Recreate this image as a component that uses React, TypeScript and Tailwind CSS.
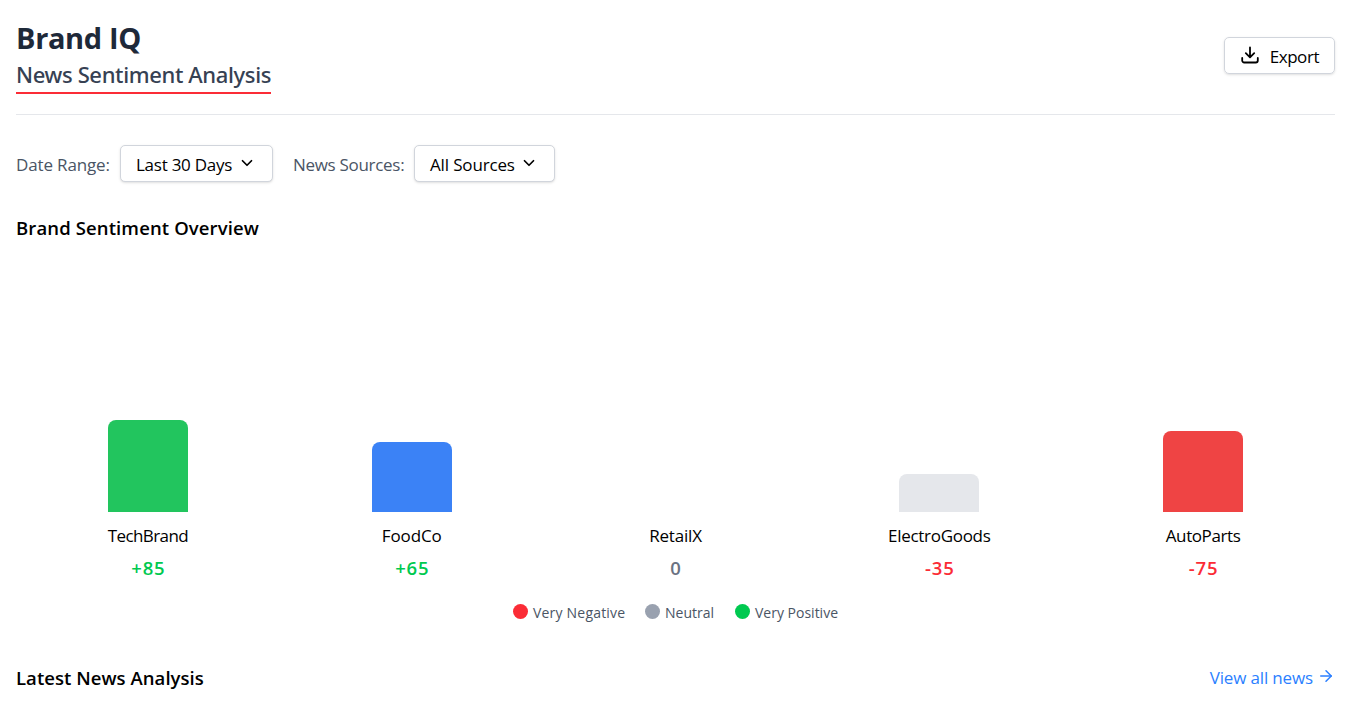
import { ArrowRight, ChevronDown } from "lucide-react";

const brands = [
  { name: "TechBrand", score: "+85", height: 92, bar: "bg-[#22c55e]", text: "text-[#00c950]", track: "tracking-[-0.6px]" },
  { name: "FoodCo", score: "+65", height: 70, bar: "bg-[#3b82f6]", text: "text-[#00c950]", track: "tracking-[-0.1px]" },
  { name: "RetailX", score: "0", height: 0, bar: "bg-[#9ca3af]", text: "text-[#6a7282]", track: "tracking-[-0.2px]" },
  { name: "ElectroGoods", score: "-35", height: 38, bar: "bg-[#e5e7eb]", text: "text-[#fb2c36]", track: "tracking-[-0.3px]" },
  { name: "AutoParts", score: "-75", height: 81, bar: "bg-[#ef4444]", text: "text-[#fb2c36]", track: "tracking-[-0.4px]" },
];

function DownloadIcon() {
  return (
    <svg width="20" height="20" viewBox="0 0 20 20" fill="none" stroke="currentColor" strokeWidth="1.8" strokeLinecap="round" strokeLinejoin="round" className="mb-0.5">
      <path d="M10 2.500v9.500M5.800 8.200l4.200 4.200 4.200-4.200" />
      <path d="M2.200 13v2.500a2 2 0 0 0 2 2h11.600a2 2 0 0 0 2-2V13" />
    </svg>
  );
}

function Select({ label, className }: { label: string; className: string }) {
  return (
    <button className={`flex h-[37px] items-center justify-between rounded-[5px] border border-[#d1d5dc] bg-white pr-4 pl-[15px] whitespace-nowrap shadow-sm ${className}`}>
      <span className="pt-0.5">{label}</span>
      <ChevronDown size={18} strokeWidth={2.3} className="mb-0.5" />
    </button>
  );
}

export default function App() {
  return (
    <main className="h-[703px] overflow-hidden bg-white pr-[18px] pl-4 font-['Open_Sans',sans-serif] text-[17px] leading-[27px] text-black">
      <header className="flex h-[115px] items-start justify-between border-b border-[#e5e7eb]">
        <div className="pt-5">
          <h1 className="h-9 text-[29px] leading-9 font-bold tracking-[-0.35px] text-[#1e2939]">Brand IQ</h1>
          <h2 className="mt-1 h-[34px] w-[255px] border-b-2 border-[#fb2c36] font-['Noto_Sans',sans-serif] text-[22px] leading-[28px] font-medium tracking-[-0.36px] whitespace-nowrap text-[#364153]">
            News Sentiment Analysis
          </h2>
        </div>
        <button className="mt-[37px] flex h-[37px] w-[111px] items-center justify-between rounded-[5px] border border-[#d1d5dc] pr-[15px] pl-[15px] shadow-sm">
          <DownloadIcon />
          <span className="pt-0.5 tracking-[-0.45px]">Export</span>
        </button>
      </header>

      <section className="mt-[30px] flex h-[37px] items-center whitespace-nowrap">
        <span className="w-[104px] pt-0.5 tracking-[-0.15px] text-[#4a5565]">Date Range:</span>
        <Select label="Last 30 Days" className="w-[153px] tracking-[-0.25px]" />
        <span className="ml-5 w-[121px] pt-0.5 tracking-[-0.3px] text-[#4a5565]">News Sources:</span>
        <Select label="All Sources" className="w-[141px] tracking-[-0.15px]" />
      </section>

      <section>
        <h3 className="mt-8 h-7 text-[18.5px] leading-7 font-semibold tracking-[0.12px]">Brand Sentiment Overview</h3>
        <div className="grid h-[340px] grid-cols-5 items-end">
          {brands.map((brand) => (
            <div key={brand.name} className="flex flex-col items-center">
              <div className={`w-20 rounded-t-lg ${brand.bar}`} style={{ height: brand.height }} />
              <span className={`mt-2.5 h-[27px] ${brand.track}`}>{brand.name}</span>
              <span className={`mt-[5px] h-7 pl-px text-[18.5px] leading-7 font-semibold tracking-[0.8px] ${brand.text}`}>{brand.score}</span>
            </div>
          ))}
        </div>
        <div className="mt-[18px] flex h-6 items-center justify-center gap-5 text-[14px] leading-6 whitespace-nowrap text-[#4a5565]">
          <div className="flex w-28 items-center gap-[5px]">
            <i className="mb-0.5 size-[15px] shrink-0 rounded-full bg-[#fb2c36]" />
            <span className="pt-0.5 tracking-[0.2px]">Very Negative</span>
          </div>
          <div className="flex w-[70px] items-center gap-[5px]">
            <i className="mb-0.5 size-[15px] shrink-0 rounded-full bg-[#99a1af]" />
            <span className="pt-0.5">Neutral</span>
          </div>
          <div className="flex w-[103px] items-center gap-[5px]">
            <i className="mb-0.5 size-[15px] shrink-0 rounded-full bg-[#00c950]" />
            <span className="pt-0.5">Very Positive</span>
          </div>
        </div>
      </section>

      <section className="mt-10 flex h-7 items-center justify-between">
        <h3 className="text-[18.5px] leading-7 font-semibold tracking-[0.05px]">Latest News Analysis</h3>
        <a className="mb-0.5 flex items-center gap-1 tracking-[-0.15px] text-[#2b7fff]">
          <span>View all news</span>
          <ArrowRight size={18} strokeWidth={2} className="mb-0.5" />
        </a>
      </section>
    </main>
  );
}
